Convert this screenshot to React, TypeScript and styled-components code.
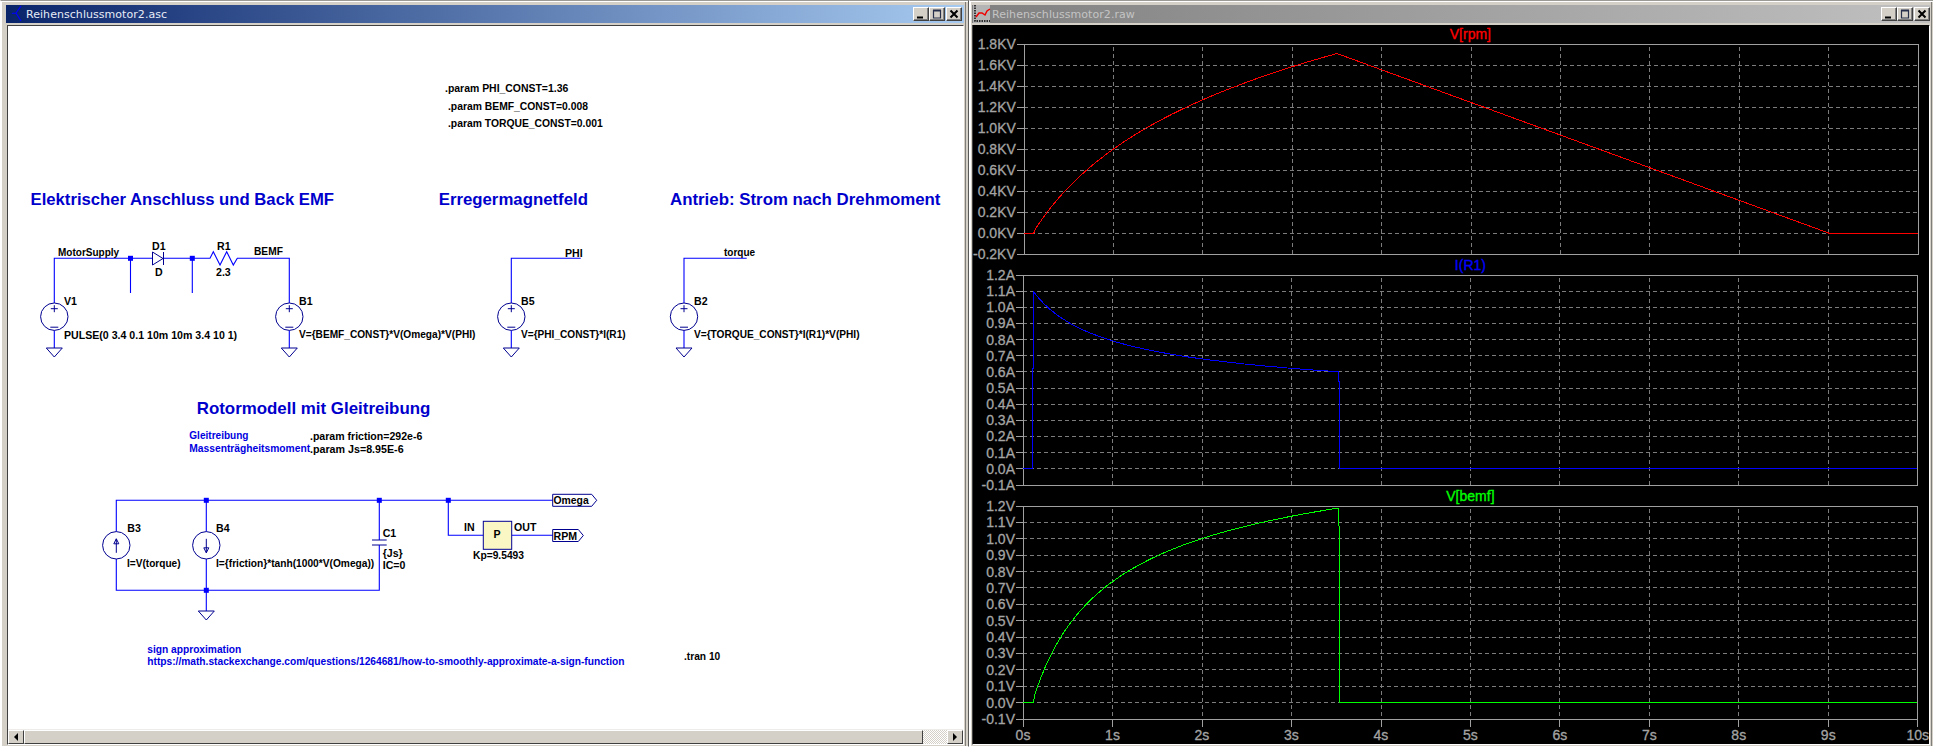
import React from "react";
import styled, { createGlobalStyle } from "styled-components";

const Global = createGlobalStyle`
  html, body { margin: 0; padding: 0; width: 1933px; height: 747px; overflow: hidden; background: #d4d0c8; }
  #root { width: 1933px; height: 747px; }
  * { box-sizing: border-box; }
`;

const Desktop = styled.div`
  display: flex;
  width: 1933px;
  height: 747px;
  font-family: "Liberation Sans", Arial, sans-serif;
`;

const Window = styled.section<{ $w: number; $pl: number }>`
  flex: 0 0 ${(p) => p.$w}px;
  height: 747px;
  display: flex;
  flex-direction: column;
  padding: 5px 4px 1px ${(p) => p.$pl}px;
  background: #d4d0c8;
  border: 1px solid;
  border-color: #9c9a94 #5a5a58 #fff #fff;
  box-shadow: inset 1px 1px 0 #fff, inset -2px 0 0 #d4d0c8, inset -3px 0 0 #807e78;
`;

const TitleBar = styled.header<{ $active?: boolean }>`
  flex: 0 0 18px;
  margin-top: -1px;
  display: flex;
  align-items: center;
  padding-right: ${(p) => (p.$active ? 2 : 0)}px;
  background: ${(p) =>
    p.$active
      ? "linear-gradient(90deg, #0a246a, #a6caf0)"
      : "linear-gradient(90deg, #808080, #c0c0c0)"};
`;

const TitleText = styled.span<{ $active?: boolean }>`
  flex: 1;
  font: 11px "DejaVu Sans", sans-serif;
  letter-spacing: 0.05px;
  color: ${(p) => (p.$active ? "#e6ebf6" : "#c4c4c4")};
  white-space: nowrap;
`;

const WinButton = styled.button`
  flex: 0 0 16px;
  height: 14px;
  padding: 0;
  display: flex;
  align-items: center;
  justify-content: center;
  background: #d4d0c8;
  border: 1px solid;
  border-color: #fff #404040 #404040 #fff;
  box-shadow: inset -1px -1px 0 #808080;
  & + &:last-child { margin-left: 1px; }
`;

const Client = styled.div<{ $ml?: number }>`
  flex: 1;
  margin: 2px 0 0 ${(p) => p.$ml ?? 0}px;
  min-height: 0;
  display: flex;
  flex-direction: column;
  border: 1px solid;
  border-color: #404040 #fff #fff #404040;
`;

const Canvas = styled.div`
  flex: 1;
  position: relative;
  background: #fff;
  overflow: hidden;
`;

const Wires = styled.svg`
  position: absolute;
  inset: 0;
`;

/* canvas text: the position on the schematic is the content */
const CanvasText = styled.span<{ $x: number; $y: number; $size?: number }>`
  position: absolute;
  left: ${(p) => p.$x - 8}px;
  top: ${(p) => p.$y - 26}px;
  transform: translateY(-50%);
  white-space: nowrap;
  line-height: 1;
  font-weight: 700;
  font-size: ${(p) => p.$size ?? 10.6}px;
`;

const NetLabel = styled(CanvasText)`
  color: #000;
`;

const Directive = styled(CanvasText)`
  color: #000;
`;

const Comment = styled(CanvasText)`
  color: #0000e0;
`;

const Heading = styled(CanvasText)`
  color: #0000cc;
`;

const ScrollBar = styled.div`
  flex: 0 0 15px;
  display: flex;
  background: #d4d0c8;
  border-top: 1px solid #eeece8;
`;

const ScrollArrow = styled.div<{ $dir: "left" | "right" }>`
  flex: 0 0 16px;
  display: flex;
  align-items: center;
  justify-content: center;
  background: #d4d0c8;
  border: 1px solid;
  border-color: #fff #404040 #404040 #fff;
  &::before {
    content: "";
    border-style: solid;
    border-width: 4px 0 4px 4px;
    border-color: transparent transparent transparent #000;
    transform: ${(p) => (p.$dir === "left" ? "rotate(180deg)" : "none")};
  }
`;

const ScrollThumb = styled.div`
  flex: 1;
  background: #d4d0c8;
  border: 1px solid;
  border-color: #fff #404040 #404040 #fff;
`;

const ScrollTrack = styled.div`
  flex: 0 0 24px;
  background: repeating-conic-gradient(#d4d0c8 0 25%, #fff 0 50%) 0 0 / 2px 2px;
`;

const PlotPane = styled.div`
  flex: 1;
  min-height: 0;
  margin-top: -1px;
  display: flex;
  flex-direction: column;
  gap: 2px;
  background: #000;
  padding-right: 11px;
`;

const PlotBlock = styled.div``;

const PlotTitle = styled.div<{ $color: string }>`
  height: 19px;
  margin-left: 50px;
  text-align: center;
  font-size: 14px;
  line-height: 19px;
  -webkit-text-stroke: 0.35px ${(p) => p.$color};
  color: ${(p) => p.$color};
`;

const PlotRow = styled.div<{ $h: number }>`
  display: flex;
  height: ${(p) => p.$h}px;
`;

const YAxis = styled.div`
  flex: 0 0 50px;
  margin: -8px 0;
  padding-right: 8px;
  display: flex;
  flex-direction: column;
  justify-content: space-between;
  align-items: flex-end;
`;

const AxisLabel = styled.span`
  font-size: 14px;
  line-height: 16px;
  height: 16px;
  white-space: nowrap;
  color: #a4a4a4;
  -webkit-text-stroke: 0.3px #a4a4a4;
`;

const PlotSvg = styled.svg`
  flex: 1;
  display: block;
  overflow: visible;
`;

const XAxis = styled.div`
  margin: 6px 0 0 50px;
  height: 16px;
  display: flex;
  justify-content: space-between;
`;

const XTick = styled.div`
  flex: 0 0 0;
  width: 0;
  min-width: 0;
  display: flex;
  justify-content: center;
`;

const WIRE = "#0000ff";
const BODY = "#000090";

const Ground = ({ x, y }: { x: number; y: number }) => (
  <polygon points={`${x - 8},${y} ${x + 8},${y} ${x},${y + 9}`} fill="none" stroke={BODY} strokeWidth={1} />
);

const Dot = ({ x, y }: { x: number; y: number }) => <rect x={x - 2.5} y={y - 2.5} width={5} height={5} fill={WIRE} />;

const VSource = ({ x, y }: { x: number; y: number }) => (
  <g fill="none" stroke={BODY} strokeWidth={1}>
    <circle cx={x} cy={y} r={13.7} />
    <path d={`M${x} ${y - 11.5}V${y - 4.5}M${x - 3.5} ${y - 8}H${x + 3.5}M${x - 4} ${y + 10.5}H${x + 4}`} />
  </g>
);

const ISource = ({ x, y, up }: { x: number; y: number; up?: boolean }) => (
  <g fill="none" stroke={BODY} strokeWidth={1}>
    <circle cx={x} cy={y} r={13.7} />
    {up ? (
      <path d={`M${x} ${y + 7.5}V${y - 6.5}M${x - 2.5} ${y - 1.5}L${x} ${y - 6.5}L${x + 2.5} ${y - 1.5}Z`} />
    ) : (
      <path d={`M${x} ${y - 6.5}V${y + 7.5}M${x - 2.5} ${y + 2.5}L${x} ${y + 7.5}L${x + 2.5} ${y + 2.5}Z`} />
    )}
  </g>
);

const Flag = ({ x, y, w }: { x: number; y: number; w: number }) => (
  <polygon
    points={`${x},${y - 6} ${x + w},${y - 6} ${x + w + 5},${y} ${x + w},${y + 6} ${x},${y + 6}`}
    fill="none"
    stroke={BODY}
    strokeWidth={1}
  />
);

const Schematic = () => (
  <Wires width="955" height="703" viewBox="8 26 955 703">
    <g fill="none" stroke={WIRE} strokeWidth={1.1}>
      <path d="M54.3 303V258.3H152M163.5 258.3H210L213.3 251.7L220 265L226.7 251.7L233.3 265L237.3 258.3H289.3V303" />
      <path d="M130.5 258.3V293M192.3 258.3V293" />
      <path d="M54.3 330.5V348M289.3 330.5V348" />
      <path d="M580.7 258.3H511.3V303M511.3 330.5V348" />
      <path d="M746.7 258.3H684V303M684 330.5V348" />
      <path d="M116.3 531.5V500.3H552.7M116.3 559V590.3H379.3V545M206.3 500.3V531.5M206.3 559V611M379.3 500.3V540" />
      <path d="M448.3 500.3V535.3H483.3M511.7 535.3H552.7" />
    </g>
    <g fill="none" stroke={BODY} strokeWidth={1}>
      <path d="M152.5 252V265L163 258.5ZM163.5 252V265" />
      <path d="M372 540H386.7M372 545H386.7" />
    </g>
    <Dot x={130.5} y={258.3} />
    <Dot x={192.3} y={258.3} />
    <Dot x={206.3} y={500.3} />
    <Dot x={379.3} y={500.3} />
    <Dot x={448.3} y={500.3} />
    <Dot x={206.3} y={590.3} />
    <VSource x={54.3} y={316.7} />
    <VSource x={289.3} y={316.7} />
    <VSource x={511.3} y={316.7} />
    <VSource x={684} y={316.7} />
    <ISource x={116.3} y={545.3} up />
    <ISource x={206.3} y={545.3} />
    <Ground x={54.3} y={348} />
    <Ground x={289.3} y={348} />
    <Ground x={511.3} y={348} />
    <Ground x={684} y={348} />
    <Ground x={206.3} y={611} />
    <rect x={483.3} y={521.3} width={28.4} height={28} fill="#fbf7c4" stroke={BODY} strokeWidth={1} />
    <Flag x={552.7} y={500.3} w={39} />
    <Flag x={552.7} y={535.5} w={25.6} />
  </Wires>
);

type Item = [string, number, number, number?];

const nets: Item[] = [
  ["MotorSupply", 58, 252.7, 10],
  ["D1", 152, 245.7],
  ["D", 155, 271.7],
  ["R1", 217, 245.7],
  ["2.3", 216, 272],
  ["BEMF", 254, 252.4, 10.2],
  ["V1", 64, 300.5],
  ["PULSE(0 3.4 0.1 10m 10m 3.4 10 1)", 64, 335, 10.6],
  ["B1", 299, 300.5],
  ["V={BEMF_CONST}*V(Omega)*V(PHI)", 299, 335, 10.15],
  ["PHI", 565, 252.7],
  ["B5", 521, 300.7],
  ["V={PHI_CONST}*I(R1)", 521, 334.7, 10.1],
  ["torque", 724, 252.7, 10],
  ["B2", 694, 300.7],
  ["V={TORQUE_CONST}*I(R1)*V(PHI)", 694, 334.7, 10.15],
  ["B3", 127.3, 528.3],
  ["I=V(torque)", 127, 563.7, 10.1],
  ["B4", 216, 528.3],
  ["I={friction}*tanh(1000*V(Omega))", 216, 563.7, 10.2],
  ["C1", 382.7, 532.7],
  ["{Js}", 382.7, 552.7],
  ["IC=0", 382.7, 565.3],
  ["P", 493.5, 534.3],
  ["IN", 464, 526.7],
  ["OUT", 514, 526.7],
  ["Kp=9.5493", 473, 555.7, 10.25],
  ["Omega", 553.5, 500.5, 10.4],
  ["RPM", 553.5, 535.5],
];

const directives: Item[] = [
  [".param PHI_CONST=1.36", 445, 88.5, 10.45],
  [".param BEMF_CONST=0.008", 448, 106.7, 10.35],
  [".param TORQUE_CONST=0.001", 448, 123.7, 10.35],
  [".param friction=292e-6", 310, 435.7, 10.55],
  [".param Js=8.95E-6", 310, 449, 10.7],
  [".tran 10", 684, 656.7, 10.2],
];

const comments: Item[] = [
  ["Gleitreibung", 189.3, 435.7, 10.05],
  ["Massenträgheitsmoment", 189.3, 449, 10.25],
  ["sign approximation", 147.3, 650, 10.2],
  ["https://math.stackexchange.com/questions/1264681/how-to-smoothly-approximate-a-sign-function", 147.3, 661.7, 10.2],
];

const headings: Item[] = [
  ["Elektrischer Anschluss und Back EMF", 30.5, 200.2, 16.7],
  ["Erregermagnetfeld", 438.7, 200.2, 16.8],
  ["Antrieb: Strom nach Drehmoment", 670, 200.2, 16.85],
  ["Rotormodell mit Gleitreibung", 196.7, 408.5, 16.9],
];

const PLOT_W = 894;
const PX_PER_S = PLOT_W / 10;
const range = (n: number) => Array.from({ length: n }, (_, i) => i);

const T_ON = 0.11;
const T_OFF = 3.52;
const rpm = (t: number) => {
  if (t <= T_ON) return 0;
  if (t <= 3.5) return 0.967 * Math.log(1 + (t - 0.1) / 0.7);
  return Math.max(0, 1.71 * (1 - (t - 3.5) / 5.5));
};
const bemf = (t: number) => (1.31 * rpm(t)) / (1 + 0.52 * rpm(t));
const current = (t: number) => 1.107 - 0.426 * bemf(t);

const steps = (from: number, to: number, dt: number) => {
  const out: number[] = [];
  for (let t = from; t < to; t += dt) out.push(t);
  out.push(to);
  return out;
};

type Sample = [number, number];

const rpmTrace: Sample[] = [[0, 0], ...steps(T_ON, 3.5, 0.02).map((t): Sample => [t, rpm(t)]), [9, 0], [10, 0]];
const currentTrace: Sample[] = [
  [0, 0],
  [0.105, 0],
  [0.105, 0.62],
  [0.112, 0.62],
  ...steps(0.112, T_OFF, 0.02).map((t): Sample => [t, current(Math.min(t, 3.5))]),
  [T_OFF, 0.55],
  [3.53, 0.54],
  [3.53, 0],
  [10, 0],
];
const bemfTrace: Sample[] = [
  [0, 0],
  ...steps(T_ON, T_OFF, 0.02).map((t): Sample => [t, bemf(Math.min(t, 3.5))]),
  [T_OFF, 1.09],
  [3.53, 1.08],
  [3.53, 0],
  [10, 0],
];

type PlotDef = {
  title: string;
  color: string;
  height: number;
  labels: string[];
  max: number;
  min: number;
  trace: Sample[];
  ticks?: boolean;
};

const plots: PlotDef[] = [
  {
    title: "V[rpm]",
    color: "#ff0000",
    height: 210,
    labels: ["1.8KV", "1.6KV", "1.4KV", "1.2KV", "1.0KV", "0.8KV", "0.6KV", "0.4KV", "0.2KV", "0.0KV", "-0.2KV"],
    max: 1.8,
    min: -0.2,
    trace: rpmTrace,
  },
  {
    title: "I(R1)",
    color: "#0000ff",
    height: 210,
    labels: ["1.2A", "1.1A", "1.0A", "0.9A", "0.8A", "0.7A", "0.6A", "0.5A", "0.4A", "0.3A", "0.2A", "0.1A", "0.0A", "-0.1A"],
    max: 1.2,
    min: -0.1,
    trace: currentTrace,
  },
  {
    title: "V[bemf]",
    color: "#00ff00",
    height: 213,
    labels: ["1.2V", "1.1V", "1.0V", "0.9V", "0.8V", "0.7V", "0.6V", "0.5V", "0.4V", "0.3V", "0.2V", "0.1V", "0.0V", "-0.1V"],
    max: 1.2,
    min: -0.1,
    trace: bemfTrace,
    ticks: true,
  },
];

const Plot = ({ def }: { def: PlotDef }) => {
  const divs = def.labels.length - 1;
  const yAt = (i: number) => (i * def.height) / divs;
  const xAt = (i: number) => (i * PLOT_W) / 10;
  const points = def.trace
    .map(([t, v]) => `${(t * PX_PER_S).toFixed(1)},${(((def.max - v) / (def.max - def.min)) * def.height).toFixed(1)}`)
    .join(" ");
  return (
    <PlotBlock>
      <PlotTitle $color={def.color}>{def.title}</PlotTitle>
      <PlotRow $h={def.height}>
        <YAxis>
          {def.labels.map((l) => (
            <AxisLabel key={l}>{l}</AxisLabel>
          ))}
        </YAxis>
        <PlotSvg viewBox={`0 0 ${PLOT_W} ${def.height}`} width={PLOT_W} height={def.height}>
          <g stroke="#7c7c7c" strokeDasharray="4 3" shapeRendering="crispEdges" fill="none">
            {range(divs - 1).map((i) => (
              <line key={i} x1={0} x2={PLOT_W} y1={yAt(i + 1)} y2={yAt(i + 1)} />
            ))}
            {range(9).map((i) => (
              <line key={i} x1={xAt(i + 1)} x2={xAt(i + 1)} y1={3} y2={def.height} />
            ))}
          </g>
          <g stroke="#a0a0a0" shapeRendering="crispEdges" fill="none">
            <rect x={0} y={0} width={PLOT_W} height={def.height} />
            {def.labels.map((_, i) => (
              <line key={i} x1={-7} x2={0} y1={yAt(i)} y2={yAt(i)} />
            ))}
            {def.ticks && range(11).map((i) => <line key={i} x1={xAt(i)} x2={xAt(i)} y1={def.height} y2={def.height + 8} />)}
          </g>
          <polyline points={points} fill="none" stroke={def.color} strokeWidth={1} shapeRendering="crispEdges" />
        </PlotSvg>
      </PlotRow>
    </PlotBlock>
  );
};

const MinGlyph = () => (
  <svg width="10" height="10" viewBox="0 0 10 10"><path d="M1 8.5H7" stroke="#000" strokeWidth="2" /></svg>
);
const MaxGlyph = () => (
  <svg width="10" height="10" viewBox="0 0 10 10"><path d="M1 1.5H9M1.5 1V9H8.5V1" stroke="#26304a" fill="none" strokeWidth="1.2" /><path d="M1 1.5H9" stroke="#26304a" strokeWidth="2" /></svg>
);
const CloseGlyph = () => (
  <svg width="10" height="10" viewBox="0 0 10 10"><path d="M1.5 1.5L8.5 8.5M8.5 1.5L1.5 8.5" stroke="#000" strokeWidth="2" /></svg>
);

const Buttons = () => (
  <>
    <WinButton aria-label="Minimize"><MinGlyph /></WinButton>
    <WinButton aria-label="Maximize"><MaxGlyph /></WinButton>
    <WinButton aria-label="Close"><CloseGlyph /></WinButton>
  </>
);

const SchematicIcon = () => (
  <svg width="20" height="18" viewBox="0 0 20 18">
    <path d="M15 1L10 8L6 8.5M10 8L15 16" fill="none" stroke="#0000ff" strokeWidth="1.2" />
  </svg>
);

const WaveIcon = () => (
  <svg width="20" height="18" viewBox="0 0 20 18">
    <rect x="1" y="0" width="17" height="18" fill="#b4b4b4" />
    <path d="M3 0V16H18" fill="none" stroke="#000" strokeWidth="1.4" strokeDasharray="1.5 1" />
    <path d="M4 12L7 8L10 8L13 10L15 6L18 4" fill="none" stroke="#f00000" strokeWidth="1.5" />
  </svg>
);

export default function App() {
  return (
    <Desktop>
      <Global />
      <Window $w={969} $pl={5}>
        <TitleBar $active>
          <SchematicIcon />
          <TitleText $active>Reihenschlussmotor2.asc</TitleText>
          <Buttons />
        </TitleBar>
        <Client $ml={1}>
          <Canvas>
            <Schematic />
            {headings.map(([t, x, y, s]) => (
              <Heading key={t} $x={x} $y={y} $size={s}>{t}</Heading>
            ))}
            {directives.map(([t, x, y, s]) => (
              <Directive key={t} $x={x} $y={y} $size={s}>{t}</Directive>
            ))}
            {comments.map(([t, x, y, s]) => (
              <Comment key={t} $x={x} $y={y} $size={s}>{t}</Comment>
            ))}
            {nets.map(([t, x, y, s]) => (
              <NetLabel key={t} $x={x} $y={y} $size={s}>{t}</NetLabel>
            ))}
          </Canvas>
          <ScrollBar>
            <ScrollArrow $dir="left" />
            <ScrollThumb />
            <ScrollTrack />
            <ScrollArrow $dir="right" />
          </ScrollBar>
        </Client>
      </Window>
      <Window $w={964} $pl={2}>
        <TitleBar>
          <WaveIcon />
          <TitleText>Reihenschlussmotor2.raw</TitleText>
          <Buttons />
        </TitleBar>
        <Client>
          <PlotPane>
            {plots.map((d) => (
              <Plot key={d.title} def={d} />
            ))}
            <XAxis>
              {range(11).map((i) => (
                <XTick key={i}>
                  <AxisLabel>{i}s</AxisLabel>
                </XTick>
              ))}
            </XAxis>
          </PlotPane>
        </Client>
      </Window>
    </Desktop>
  );
}
